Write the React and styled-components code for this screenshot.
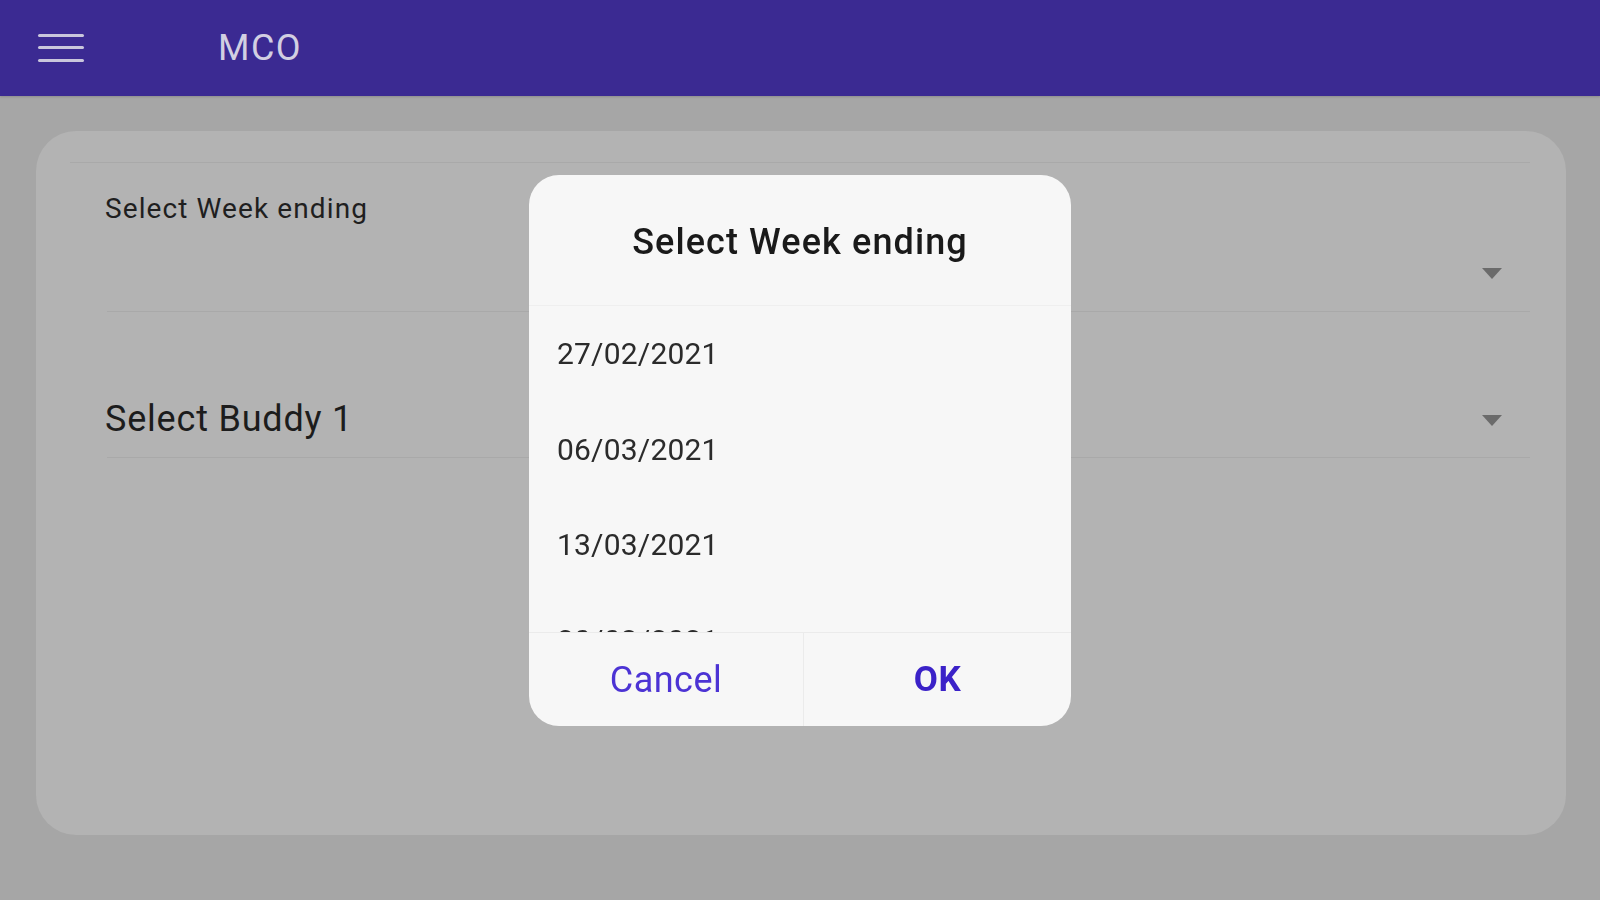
import React from "react";
import styled, { createGlobalStyle } from "styled-components";

const GlobalStyle = createGlobalStyle`
  html, body {
    margin: 0;
    padding: 0;
    background: #a6a6a6;
    font-family: Roboto, "Liberation Sans", Arial, sans-serif;
  }
`;

const weeks = ["27/02/2021", "06/03/2021", "13/03/2021", "20/03/2021", "27/03/2021"];

const App = () => {
  return (
    <Page>
      <GlobalStyle />
      <Header>
        <MenuButton aria-label="menu">
          <span />
          <span />
          <span />
        </MenuButton>
        <Title>MCO</Title>
      </Header>
      <Main>
        <Card>
          <TopRule />
          <Field height={149} padTop={29}>
            <Label>Select Week ending</Label>
            <ValueRow offset={40}>
              <span />
              <Caret />
            </ValueRow>
          </Field>
          <Field height={146} padTop={86}>
            <ValueRow offset={0}>
              <Value>Select Buddy 1</Value>
              <Caret />
            </ValueRow>
          </Field>
        </Card>
      </Main>

      <Dialog role="dialog">
        <DialogTitle>Select Week ending</DialogTitle>
        <List>
          {weeks.map((w) => (
            <Item key={w}>{w}</Item>
          ))}
        </List>
        <Actions>
          <ActionButton>Cancel</ActionButton>
          <ActionButton primary>OK</ActionButton>
        </Actions>
      </Dialog>
    </Page>
  );
};

export default App;

const Page = styled.div`
  width: 1600px;
  height: 900px;
  overflow: hidden;
  background: #a6a6a6;
`;

const Header = styled.header`
  height: 96px;
  background: #3b2a92;
  display: flex;
  align-items: center;
  padding-left: 38px;
  box-shadow: 0 1px 2px rgba(0, 0, 0, 0.15);
`;

const MenuButton = styled.div`
  width: 46px;
  height: 28px;
  display: flex;
  flex-direction: column;
  justify-content: space-between;
  margin-top: -1px;
  span {
    display: block;
    height: 3px;
    border-radius: 2px;
    background: #c9c6dc;
  }
`;

const Title = styled.div`
  margin-left: 134px;
  font-size: 36px;
  color: #d2cfe2;
  letter-spacing: 1.5px;
`;

const Main = styled.main`
  padding: 35px 34px 0 36px;
`;

const Card = styled.section`
  height: 704px;
  background: #b3b3b3;
  border-radius: 40px;
  padding-top: 31px;
  box-sizing: border-box;
`;

const TopRule = styled.div`
  margin: 0 36px 0 34px;
  border-top: 1px solid #a9a9a9;
`;

const Field = styled.div`
  height: ${(p) => p.height}px;
  box-sizing: border-box;
  margin: 0 36px 0 71px;
  padding: ${(p) => p.padTop}px 28px 0 0;
  border-bottom: 1px solid #a9a9a9;
  display: flex;
  flex-direction: column;
`;

const Label = styled.div`
  font-size: 28px;
  color: #1f1f1f;
  letter-spacing: 1.1px;
  margin-left: -2px;
`;

const ValueRow = styled.div`
  margin-top: ${(p) => p.offset}px;
  display: flex;
  align-items: center;
  justify-content: space-between;
`;

const Value = styled.div`
  font-size: 36px;
  color: #1c1c1c;
  letter-spacing: 0.8px;
  margin-left: -2px;
`;

const Caret = styled.div`
  width: 0;
  height: 0;
  margin-top: 3px;
  border-left: 10px solid transparent;
  border-right: 10px solid transparent;
  border-top: 11px solid #6b6b6b;
`;

const Dialog = styled.div`
  position: fixed;
  left: 529px;
  top: 175px;
  width: 542px;
  height: 551px;
  background: #f7f7f7;
  border-radius: 30px;
  display: flex;
  flex-direction: column;
  overflow: hidden;
`;

const DialogTitle = styled.div`
  height: 131px;
  box-sizing: border-box;
  padding-top: 46px;
  text-align: center;
  font-size: 36px;
  font-weight: 500;
  color: #1a1a1a;
  letter-spacing: 1.1px;
  border-bottom: 1px solid #efefef;
`;

const List = styled.div`
  height: 326px;
  overflow: hidden;
`;

const Item = styled.div`
  height: 95.5px;
  display: flex;
  align-items: center;
  padding-left: 28px;
  font-size: 30px;
  color: #2b2b2b;
  letter-spacing: 0.2px;
`;

const Actions = styled.div`
  flex: 1;
  display: flex;
  border-top: 1px solid #ebebeb;
`;

const ActionButton = styled.button`
  flex: ${(p) => (p.primary ? "0 0 268px" : "0 0 274px")};
  border: none;
  background: transparent;
  font-family: inherit;
  font-size: ${(p) => (p.primary ? "35px" : "36px")};
  font-weight: ${(p) => (p.primary ? 700 : 400)};
  color: ${(p) => (p.primary ? "#3b22c8" : "#4c33d4")};
  border-left: ${(p) => (p.primary ? "1px solid #ebebeb" : "none")};
  letter-spacing: 0.5px;
  padding: 0;
`;
